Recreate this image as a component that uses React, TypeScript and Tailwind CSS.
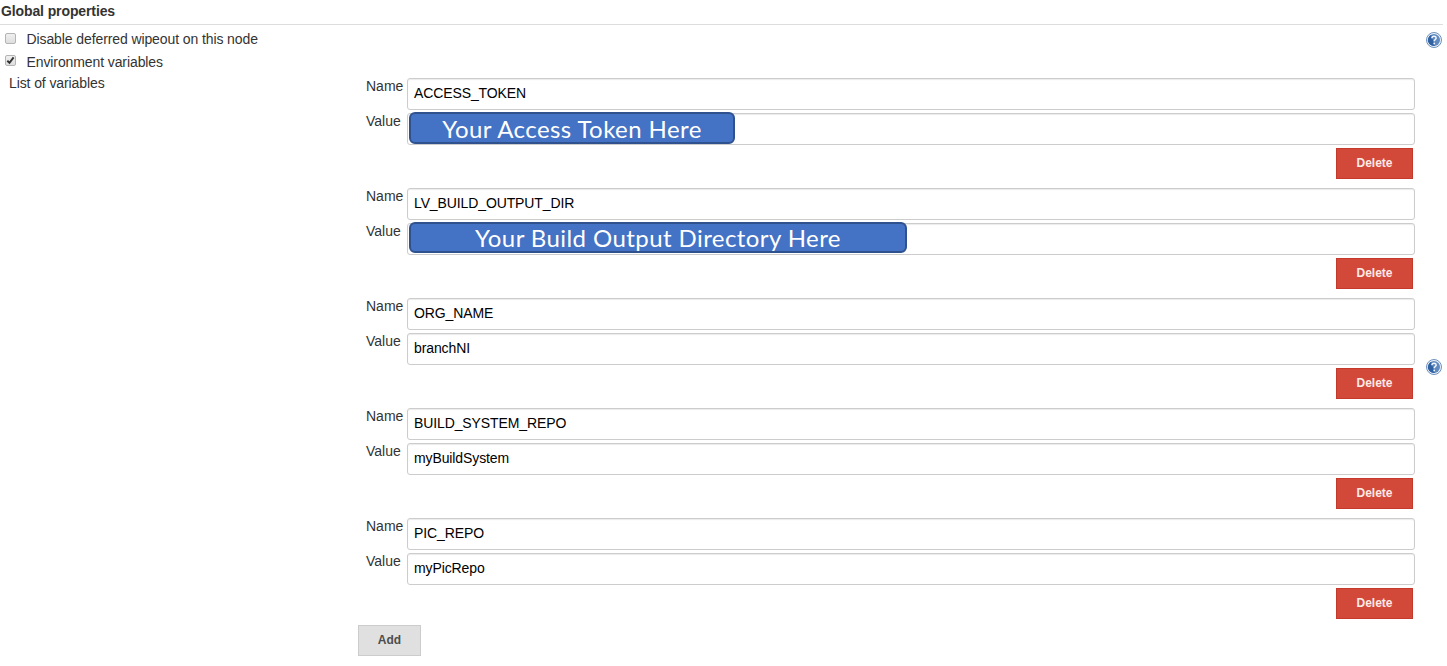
type Variable = { name: string; value: string; cover?: "token" | "directory" };

const variables: Variable[] = [
  { name: "ACCESS_TOKEN", value: "", cover: "token" },
  { name: "LV_BUILD_OUTPUT_DIR", value: "", cover: "directory" },
  { name: "ORG_NAME", value: "branchNI" },
  { name: "BUILD_SYSTEM_REPO", value: "myBuildSystem" },
  { name: "PIC_REPO", value: "myPicRepo" },
];

const fieldClass =
  "h-8 w-[1008px] shrink-0 rounded-[3px] border border-[#ccc] bg-white px-1.5 text-[14px] leading-[28px] tracking-[-0.11px] text-black shadow-[inset_0_1px_1px_rgba(0,0,0,0.08)]";

function HelpIcon() {
  return (
    <svg className="size-4 shrink-0" viewBox="0 0 16 16" fill="none">
      <circle cx="8" cy="8" r="7.5" fill="#eef3fa" stroke="#5f84b6" strokeWidth="0.9" />
      <circle cx="8" cy="8" r="6" fill="#5f89bf" />
      <path d="M3 11.5A6 6 0 0 1 5 2.8L9 13.8A6 6 0 0 1 3 11.5Z" fill="#2f61a3" />
      <path d="M5.9 6.2C5.9 3.5 10.3 3.6 10.1 6.1C10 7.5 8.2 7.6 8.2 9.3" stroke="#f2f6fb" strokeWidth="1.5" />
      <circle cx="8.2" cy="11.5" r="0.9" fill="#f2f6fb" />
    </svg>
  );
}

function Checkbox({ checked = false }: { checked?: boolean }) {
  return (
    <span className="mb-[3px] flex size-[11px] shrink-0 items-center justify-center rounded-[2px] border border-[#b4b4b4] bg-linear-to-b from-[#f0f0f0] to-[#dedede]">
      {checked && (
        <svg className="size-[9px]" viewBox="0 0 9 9" fill="none">
          <path d="M1.3 4.7L3.5 6.8L7.6 1.4" stroke="#333" strokeWidth="1.9" />
        </svg>
      )}
    </span>
  );
}

function VariableGroup({ item }: { item: Variable }) {
  return (
    <section className="flex h-[110px] flex-col">
      <div className="flex h-[35px]">
        <label className="w-[41px] shrink-0 leading-4">Name</label>
        <div className={fieldClass}>{item.name}</div>
      </div>
      <div className="relative flex h-[35px]">
        <label className="w-[41px] shrink-0 leading-4">Value</label>
        <div className={fieldClass}>{item.value}</div>
        {item.cover === "token" && (
          <div className="absolute -top-px left-[43px] h-8 w-[326px] rounded-md border-2 border-[#2f528f] bg-[#4472c4] text-center font-[Lato,sans-serif] text-[24px] leading-[29px] tracking-[0.42px] text-white">
            Your Access Token Here
          </div>
        )}
        {item.cover === "directory" && (
          <div className="absolute -top-px left-[43px] h-[31px] w-[498px] rounded-md border-2 border-[#2f528f] bg-[#4472c4] text-center font-[Lato,sans-serif] text-[24px] leading-[27px] tracking-[0.42px] text-white">
            Your Build Output Directory Here
          </div>
        )}
      </div>
      <button className="ml-[970px] h-[31px] w-[77px] border border-[#c4392b] bg-[#d24939] text-[12px] leading-[29px] font-bold text-[#fbe9e7]">
        Delete
      </button>
    </section>
  );
}

export default function App() {
  return (
    <main className="h-[666px] w-[1447px] overflow-hidden bg-white font-['Liberation_Sans',Arial,sans-serif] text-[14px] text-[#333]">
      <h1 className="h-[25px] w-[1443px] border-b border-[#ddd] pl-px text-[14px] leading-[23px] font-bold tracking-[-0.11px]">
        Global properties
      </h1>
      <div className="flex">
        <div className="w-[366px] shrink-0 pt-[3px] tracking-[-0.1px]">
          <div className="flex h-[23px] items-center pl-[4.5px]">
            <Checkbox />
            <span className="pl-[11px]">Disable deferred wipeout on this node</span>
          </div>
          <div className="flex h-[22px] items-center pl-[4.5px]">
            <Checkbox checked />
            <span className="pl-[11px]">Environment variables</span>
          </div>
          <div className="pl-[9px] leading-[20px]">List of variables</div>
        </div>
        <div className="w-[1060px] shrink-0 pt-[53px]">
          {variables.map((item) => (
            <VariableGroup key={item.name} item={item} />
          ))}
          <button className="-mt-[3px] -ml-2 block h-[31px] w-[63px] border border-[#ccc] bg-[#e0e0e0] text-[12px] leading-[27px] font-bold text-[#4d4d4d]">
            Add
          </button>
        </div>
        <div className="flex flex-col gap-[311px] pt-[7px]">
          <HelpIcon />
          <HelpIcon />
        </div>
      </div>
    </main>
  );
}
